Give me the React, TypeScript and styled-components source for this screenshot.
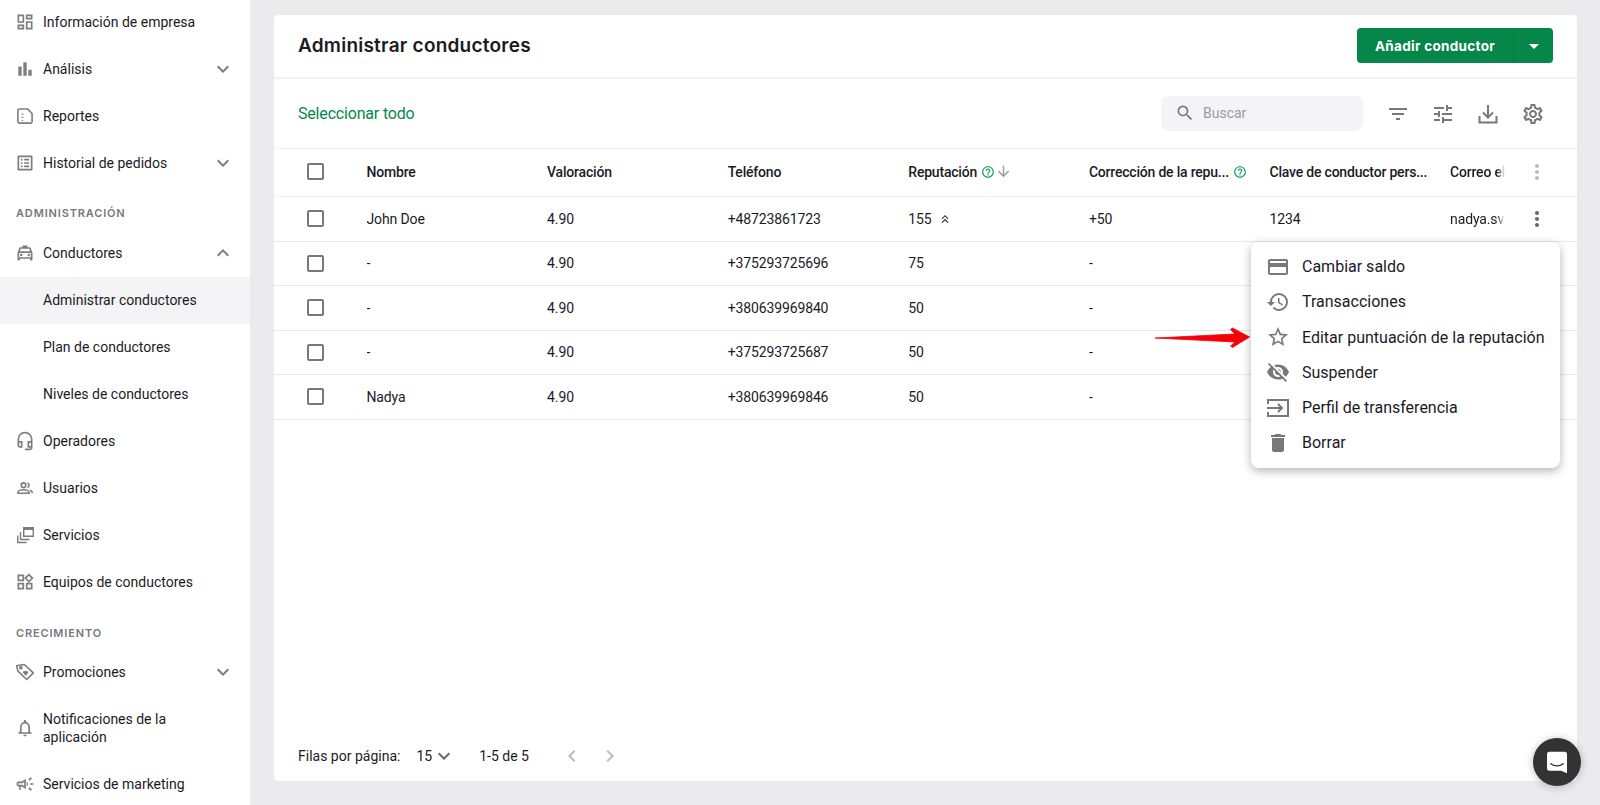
import React from "react";
import styled, { createGlobalStyle } from "styled-components";
import {
  MdOutlineDashboard, MdBarChart, MdOutlineListAlt, MdOutlineLocalTaxi, MdOutlineHeadsetMic,
  MdOutlineWidgets, MdOutlineNotifications, MdOutlineCampaign,
  MdKeyboardArrowDown, MdKeyboardArrowUp, MdArrowDropDown, MdSearch, MdFilterList, MdTune,
  MdOutlineSettings, MdHelpOutline, MdArrowDownward, MdKeyboardDoubleArrowUp, MdMoreVert,
  MdOutlineCreditCard, MdHistory, MdStarBorder, MdVisibilityOff, MdDelete, MdChevronLeft, MdChevronRight,
} from "react-icons/md";

const Global = createGlobalStyle`
  html, body { margin: 0; height: 100%; overflow: hidden; }
  body { font-family: Roboto, "Liberation Sans", sans-serif; font-size: 14px; color: #1b1b1f; background: #ebebed; }
`;

const Page = styled.div`
  display: flex;
  width: 1600px;
  height: 805px;
  overflow: hidden;
  position: relative;
`;

const Sidebar = styled.nav`
  width: 250px;
  flex: none;
  background: #fff;
  overflow: hidden;
`;

const NavList = styled.div`
  display: flex;
  flex-direction: column;
  margin-top: -1.5px;
`;

const NavItem = styled.div<{ $active?: boolean; $sub?: boolean; $tall?: boolean }>`
  display: flex;
  align-items: center;
  flex: none;
  min-height: ${(p) => (p.$tall ? "65px" : "47px")};
  padding: ${(p) => (p.$sub ? "0 15px 0 43px" : "0 15px")};
  background: ${(p) => (p.$active ? "#f4f4f6" : "transparent")};
  font-size: 14px;
  line-height: 18px;
`;

const NavIcon = styled.span`
  width: 20px;
  height: 20px;
  flex: none;
  margin-right: 8px;
  color: #7c7c82;
  display: flex;
  svg { width: 20px; height: 20px; }
`;

const NavLabel = styled.span`
  flex: 1;
  max-width: 138px;
`;

const NavWide = styled.span`
  flex: 1;
`;

const NavChevron = styled.span`
  width: 24px;
  height: 24px;
  flex: none;
  color: #7c7c82;
  display: flex;
  svg { width: 24px; height: 24px; }
`;

const SectionLabel = styled.div<{ $top: number }>`
  display: flex;
  align-items: center;
  height: 43px;
  padding-left: 16px;
  padding-top: ${(p) => p.$top}px;
  box-sizing: border-box;
  font-family: Inter, sans-serif;
  font-size: 11px;
  font-weight: 600;
  letter-spacing: 0.85px;
  color: #77777f;
`;

const Main = styled.main`
  flex: 1;
  min-width: 0;
  padding: 15px 23px 24px 24px;
  display: flex;
`;

const Card = styled.section`
  flex: 1;
  min-width: 0;
  position: relative;
  background: #fff;
  border-radius: 4px;
  display: flex;
  flex-direction: column;
`;

const Header = styled.header`
  height: 62px;
  flex: none;
  display: flex;
  align-items: center;
  justify-content: space-between;
  padding: 0 24px;
  border-bottom: 2px solid #f2f2f4;
`;

const Title = styled.h1`
  margin: -2px 0 0;
  font-family: Inter, sans-serif;
  font-weight: 600;
  font-size: 19px;
  letter-spacing: 0.23px;
  color: #1b1b1f;
`;

const SplitButton = styled.div`
  display: flex;
  height: 35.5px;
  width: 196px;
  margin-top: -1px;
  border-radius: 4px;
  background: #05874a;
  color: #fff;
`;

const ButtonMain = styled.div`
  width: 156px;
  display: flex;
  align-items: center;
  justify-content: center;
  font-family: Inter, sans-serif;
  font-weight: 700;
  font-size: 13.5px;
  letter-spacing: 0.3px;
  border-right: 1px solid #0a7a45;
`;

const ButtonCaret = styled.div`
  flex: 1;
  display: flex;
  align-items: center;
  justify-content: center;
  svg { width: 24px; height: 24px; }
`;

const Toolbar = styled.div`
  height: 69px;
  flex: none;
  display: flex;
  align-items: center;
  padding: 0 32px 0 24px;
  border-bottom: 1px solid #f2f2f4;
`;

const SelectAll = styled.span`
  font-size: 16px;
  letter-spacing: -0.18px;
  color: #05874a;
  flex: 1;
`;

const SearchBox = styled.div`
  width: 202px;
  height: 35px;
  display: flex;
  align-items: center;
  gap: 8px;
  padding-left: 14px;
  margin-top: -1px;
  box-sizing: border-box;
  background: #f4f4f6;
  border-radius: 8px;
  color: #9a9aa0;
  svg { width: 20px; height: 20px; color: #77777d; }
`;

const ToolIcons = styled.div`
  display: flex;
  gap: 21px;
  margin-left: 23px;
  color: #77777d;
  svg { width: 24px; height: 24px; display: block; }
`;

const Table = styled.div`
  flex: 1;
  min-height: 0;
`;

const Row = styled.div<{ $head?: boolean }>`
  display: grid;
  grid-template-columns: 92.5px repeat(6, 180.6px) 55px 1fr;
  height: ${(p) => (p.$head ? "48px" : "44.5px")};
  padding-bottom: ${(p) => (p.$head ? "2px" : "0")};
  box-sizing: border-box;
  align-items: center;
  border-bottom: 1px solid ${(p) => (p.$head ? "#f2f2f4" : "#e8e8ea")};
  font-weight: ${(p) => (p.$head ? 500 : 400)};
  letter-spacing: ${(p) => (p.$head ? "-0.2px" : "-0.13px")};
`;

const CheckCell = styled.div`
  display: flex;
  padding-left: 33px;
`;

const Check = styled.span`
  width: 17px;
  height: 17px;
  box-sizing: border-box;
  border: 2px solid #77777d;
  border-radius: 2px;
`;

const Cell = styled.div`
  display: flex;
  align-items: center;
  white-space: nowrap;
  overflow: hidden;
  min-width: 0;
`;

const Clipped = styled(Cell)`
  -webkit-mask-image: linear-gradient(to right, #000 calc(100% - 8px), transparent);
  mask-image: linear-gradient(to right, #000 calc(100% - 8px), transparent);
`;

const Help = styled(MdHelpOutline)`
  width: 14px;
  height: 14px;
  color: #0a9a55;
  margin-left: 4px;
  flex: none;
`;

const SortArrow = styled(MdArrowDownward)`
  width: 17px;
  height: 17px;
  color: #9a9aa0;
  margin-left: 0;
`;

const TrendUp = styled(MdKeyboardDoubleArrowUp)`
  width: 14px;
  height: 14px;
  margin-left: 6px;
  color: #333;
`;

const DotsCell = styled.div<{ $muted?: boolean }>`
  display: flex;
  padding-left: 20px;
  color: ${(p) => (p.$muted ? "#bcbcc0" : "#66666b")};
  svg { width: 24px; height: 24px; }
`;

const Footer = styled.footer`
  height: 50px;
  flex: none;
  display: flex;
  align-items: center;
  padding-left: 24px;
`;

const PerPage = styled.span`
  margin-left: 16px;
`;

const FootCaret = styled(MdKeyboardArrowDown)`
  width: 24px;
  height: 24px;
  color: #66666b;
`;

const Range = styled.span`
  margin-left: 23px;
`;

const Pager = styled.div`
  margin-left: 31px;
  display: flex;
  gap: 14px;
  color: #bcbcc0;
  svg { width: 24px; height: 24px; display: block; }
`;

const Menu = styled.div`
  position: absolute;
  left: 977px;
  top: 227px;
  width: 309px;
  height: 226px;
  padding: 7.2px 0;
  box-sizing: border-box;
  background: #fff;
  border-radius: 8px;
  box-shadow: 0 3px 10px rgba(0, 0, 0, 0.3);
`;

const MenuItem = styled.div`
  height: 35.2px;
  display: flex;
  align-items: center;
  gap: 12px;
  padding-left: 15px;
  font-size: 16px;
  white-space: nowrap;
  svg { width: 24px; height: 24px; color: #77777d; flex: none; }
`;

const ArrowMark = styled.svg`
  position: absolute;
  left: 881px;
  top: 311px;
  width: 96px;
  height: 24px;
`;

const ChatBubble = styled.div`
  position: absolute;
  left: 1533px;
  top: 738px;
  width: 48px;
  height: 48px;
  border-radius: 50%;
  background: #333;
  box-shadow: 0 1px 8px rgba(0, 0, 0, 0.25);
  display: flex;
  align-items: center;
  justify-content: center;
  svg { width: 20px; height: 23px; }
`;

const ReportIcon = () => (
  <svg viewBox="0 0 24 24" fill="none" stroke="currentColor" strokeWidth="1.9">
    <path d="M3.5 5a1.5 1.5 0 0 1 1.5-1.5h10L20.5 9v10a1.5 1.5 0 0 1-1.5 1.5H5A1.5 1.5 0 0 1 3.5 19z" strokeLinejoin="round" />
    <path d="M9 9v1.5M9 13v1.5M9 17v1" />
  </svg>
);
const UsersIcon = () => (
  <svg viewBox="0 0 20 20" fill="none" stroke="currentColor" strokeWidth="1.6">
    <circle cx="8.5" cy="7.2" r="2.3" />
    <path d="M2.8 15.3v-.6c0-2 3.2-3 5.7-3s5.7 1 5.7 3v.6z" strokeLinejoin="round" />
    <path d="M12.4 5a2.3 2.3 0 0 1 0 4.4M15 11.9c1.4.6 2.4 1.5 2.4 3.4" />
  </svg>
);
const ServicesIcon = () => (
  <svg viewBox="0 0 20 20" fill="none" stroke="currentColor" strokeWidth="1.4">
    <path d="M8.7 2.7h9.6v8.6H8.7z" />
    <path d="M8 2h11v3H8z" fill="currentColor" stroke="none" />
    <path d="M5.5 7v7.5h9M2.7 10.5v7h9" />
  </svg>
);
const TagIcon = () => (
  <svg viewBox="0 0 24 24" fill="none" stroke="currentColor" strokeWidth="1.9">
    <path d="M2 4.5 11 3l11 10-8 8L3.5 11z" strokeLinejoin="round" />
    <circle cx="7" cy="7" r="1.2" fill="currentColor" />
    <path d="M13 16.5l-3-3a1.7 1.7 0 0 1 2.6-2.2 1.7 1.7 0 0 1 2.7 2.2z" fill="currentColor" stroke="none" />
  </svg>
);
const DownloadIcon = () => (
  <svg viewBox="0 0 24 24" fill="none" stroke="currentColor" strokeWidth="2">
    <path d="M12 3v12M7 10.5l5 5 5-5" />
    <path d="M3.5 14v6.5h17V14" />
  </svg>
);
const TransferIcon = () => (
  <svg viewBox="0 0 24 24" fill="none" stroke="currentColor" strokeWidth="2">
    <path d="M2 8V4h20v16H2v-4" />
    <path d="M1 12h15M12 8l4 4-4 4" />
  </svg>
);

const columns = (rep: React.ReactNode, corr: string, name: string, phone: string, key: string, mail: string) => (
  <>
    <CheckCell><Check /></CheckCell>
    <Cell>{name}</Cell>
    <Cell>4.90</Cell>
    <Cell>{phone}</Cell>
    <Cell>{rep}</Cell>
    <Cell>{corr}</Cell>
    <Cell>{key}</Cell>
    <Clipped>{mail}</Clipped>
    <DotsCell><MdMoreVert /></DotsCell>
  </>
);

const rows = [
  { name: "-", phone: "+375293725696", rep: "75" },
  { name: "-", phone: "+380639969840", rep: "50" },
  { name: "-", phone: "+375293725687", rep: "50" },
  { name: "Nadya", phone: "+380639969846", rep: "50" },
];

export default function App() {
  return (
    <Page>
      <Global />
      <Sidebar>
        <NavList>
          <NavItem><NavIcon><MdOutlineDashboard /></NavIcon><NavWide>Información de empresa</NavWide></NavItem>
          <NavItem><NavIcon><MdBarChart /></NavIcon><NavWide>Análisis</NavWide><NavChevron><MdKeyboardArrowDown /></NavChevron></NavItem>
          <NavItem><NavIcon><ReportIcon /></NavIcon><NavWide>Reportes</NavWide></NavItem>
          <NavItem><NavIcon><MdOutlineListAlt /></NavIcon><NavWide>Historial de pedidos</NavWide><NavChevron><MdKeyboardArrowDown /></NavChevron></NavItem>
          <SectionLabel $top={10}>ADMINISTRACIÓN</SectionLabel>
          <NavItem><NavIcon><MdOutlineLocalTaxi /></NavIcon><NavWide>Conductores</NavWide><NavChevron><MdKeyboardArrowUp /></NavChevron></NavItem>
          <NavItem $sub $active>Administrar conductores</NavItem>
          <NavItem $sub>Plan de conductores</NavItem>
          <NavItem $sub>Niveles de conductores</NavItem>
          <NavItem><NavIcon><MdOutlineHeadsetMic /></NavIcon><NavWide>Operadores</NavWide></NavItem>
          <NavItem><NavIcon><UsersIcon /></NavIcon><NavWide>Usuarios</NavWide></NavItem>
          <NavItem><NavIcon><ServicesIcon /></NavIcon><NavWide>Servicios</NavWide></NavItem>
          <NavItem><NavIcon><MdOutlineWidgets /></NavIcon><NavWide>Equipos de conductores</NavWide></NavItem>
          <SectionLabel $top={12}>CRECIMIENTO</SectionLabel>
          <NavItem><NavIcon><TagIcon /></NavIcon><NavWide>Promociones</NavWide><NavChevron><MdKeyboardArrowDown /></NavChevron></NavItem>
          <NavItem $tall><NavIcon><MdOutlineNotifications /></NavIcon><NavLabel>Notificaciones de la aplicación</NavLabel></NavItem>
          <NavItem><NavIcon><MdOutlineCampaign /></NavIcon><NavWide>Servicios de marketing</NavWide></NavItem>
        </NavList>
      </Sidebar>
      <Main>
        <Card>
          <Header>
            <Title>Administrar conductores</Title>
            <SplitButton>
              <ButtonMain>Añadir conductor</ButtonMain>
              <ButtonCaret><MdArrowDropDown /></ButtonCaret>
            </SplitButton>
          </Header>
          <Toolbar>
            <SelectAll>Seleccionar todo</SelectAll>
            <SearchBox><MdSearch />Buscar</SearchBox>
            <ToolIcons>
              <MdFilterList />
              <MdTune />
              <DownloadIcon />
              <MdOutlineSettings />
            </ToolIcons>
          </Toolbar>
          <Table>
            <Row $head>
              <CheckCell><Check /></CheckCell>
              <Cell>Nombre</Cell>
              <Cell>Valoración</Cell>
              <Cell>Teléfono</Cell>
              <Cell>Reputación<Help /><SortArrow /></Cell>
              <Cell>Corrección de la repu...<Help /></Cell>
              <Cell>Clave de conductor pers...</Cell>
              <Clipped>Correo electrónico</Clipped>
              <DotsCell $muted><MdMoreVert /></DotsCell>
            </Row>
            <Row>{columns(<>155<TrendUp /></>, "+50", "John Doe", "+48723861723", "1234", "nadya.svirid@example.com")}</Row>
            {rows.map((r) => (
              <Row key={r.phone}>{columns(r.rep, "-", r.name, r.phone, "", "")}</Row>
            ))}
          </Table>
          <Footer>
            Filas por página:
            <PerPage>15</PerPage>
            <FootCaret />
            <Range>1-5 de 5</Range>
            <Pager><MdChevronLeft /><MdChevronRight /></Pager>
          </Footer>
          <ArrowMark viewBox="0 0 96 24">
            <path d="M0 12 L80 8 L75.5 3.5 L77.5 2 L94.5 11 L77.5 21.5 L75.5 20 L80 16 Z" fill="#f5000a" stroke="#f5000a" strokeWidth="0.8" strokeLinejoin="round" />
          </ArrowMark>
          <Menu>
            <MenuItem><MdOutlineCreditCard />Cambiar saldo</MenuItem>
            <MenuItem><MdHistory />Transacciones</MenuItem>
            <MenuItem><MdStarBorder />Editar puntuación de la reputación</MenuItem>
            <MenuItem><MdVisibilityOff />Suspender</MenuItem>
            <MenuItem><TransferIcon />Perfil de transferencia</MenuItem>
            <MenuItem><MdDelete />Borrar</MenuItem>
          </Menu>
        </Card>
      </Main>
      <ChatBubble>
        <svg viewBox="0 0 24 26">
          <path d="M3 0h18a3 3 0 0 1 3 3v23l-7-3H3a3 3 0 0 1-3-3V3a3 3 0 0 1 3-3z" fill="#fff" />
          <path d="M4.5 14.5c4 3.5 11 3.5 15 0" fill="none" stroke="#333" strokeWidth="1.6" strokeLinecap="round" />
        </svg>
      </ChatBubble>
    </Page>
  );
}
